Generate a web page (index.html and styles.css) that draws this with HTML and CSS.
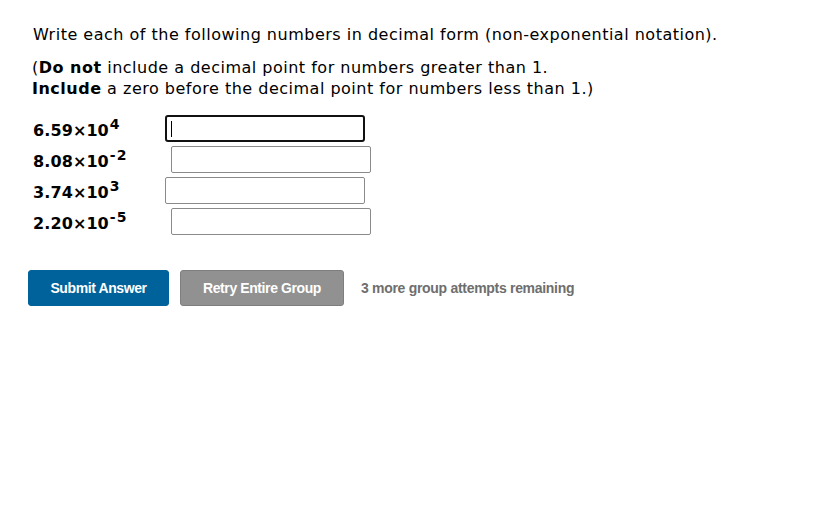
FILE: index.html
```html
<!DOCTYPE html>
<html>
<head>
<meta charset="utf-8">
<link rel="stylesheet" href="styles.css">
</head>
<body>
<div class="page">
  <p class="intro">Write each of the following numbers in decimal form (non-exponential notation).</p>
  <p class="note">(<b>Do not</b> include a decimal point for numbers greater than 1.<br><b>Include</b> a zero before the decimal point for numbers less than 1.)</p>
  <div class="rows">
    <div class="row"><span class="lbl">6.59×10<sup>4</sup></span><span class="field focus"><span class="caret"></span></span></div>
    <div class="row"><span class="lbl">8.08×10<sup>-2</sup></span><span class="field"></span></div>
    <div class="row"><span class="lbl">3.74×10<sup>3</sup></span><span class="field"></span></div>
    <div class="row"><span class="lbl">2.20×10<sup>-5</sup></span><span class="field"></span></div>
  </div>
  <div class="actions">
    <button class="btn submit">Submit Answer</button>
    <button class="btn retry">Retry Entire Group</button>
    <span class="remain">3 more group attempts remaining</span>
  </div>
</div>
</body>
</html>
```
FILE: styles.css
```css
html, body { margin: 0; padding: 0; background: #fff; }
.page {
  padding: 24px 0 0 33px;
  font-family: "DejaVu Sans", Verdana, sans-serif;
  font-size: 16px;
  letter-spacing: 0.5px;
  color: #000;
}
.intro { margin: 0 0 11px 0; line-height: 22px; }
.note { margin: 0 0 16px -1px; line-height: 21px; }
.rows { display: flex; flex-direction: column; gap: 4px; }
.row { display: flex; align-items: center; height: 27px; }
.lbl { font-weight: bold; font-size: 16px; letter-spacing: 0.1px; margin-right: 44px; position: relative; top: 2px; }
.lbl sup { font-size: 14px; vertical-align: 7px; line-height: 0; letter-spacing: 1px; margin-left: 1px; }
.field {
  display: inline-block;
  box-sizing: border-box;
  width: 200px;
  height: 27px;
  border: 1px solid #8a8a8a;
  border-radius: 2px;
  background: #fff;
  position: relative;
}
.field.focus { border: 2px solid #111; border-radius: 3px; }
.caret { position: absolute; left: 4px; top: 4px; width: 1px; height: 16px; background: #000; }
.actions { display: flex; align-items: center; margin-top: 35px; margin-left: -5px; gap: 11px; letter-spacing: 0; }
.btn {
  font-family: "Liberation Sans", Arial, sans-serif;
  font-weight: bold;
  font-size: 14px;
  letter-spacing: -0.4px;
  color: #fff;
  height: 36px;
  border-radius: 3px;
  cursor: pointer;
}
.submit { background: #00629b; border: 1px solid #00629b; width: 141px; }
.retry { background: #919191; border: 1px solid #7e7e7e; width: 164px; }
.remain {
  font-family: "Liberation Sans", Arial, sans-serif;
  font-weight: bold; font-size: 14px; color: #6e6e6e; margin-left: 6px; letter-spacing: -0.3px;
}
```
